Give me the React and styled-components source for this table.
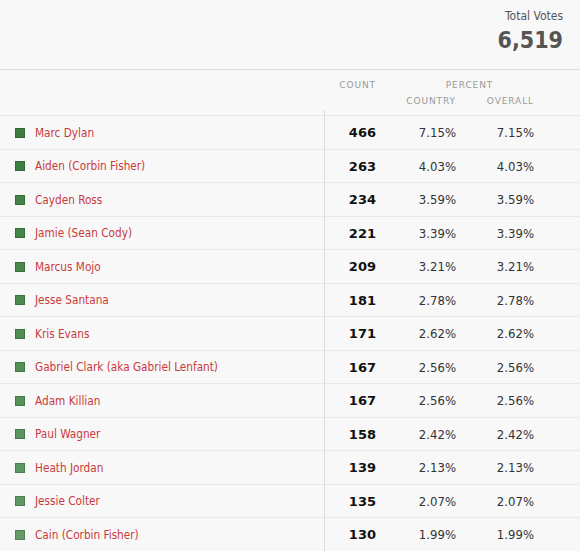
import React from "react";
import styled, { createGlobalStyle } from "styled-components";

const GlobalStyle = createGlobalStyle`
  html, body {
    margin: 0;
    padding: 0;
    background: #f8f8f8;
  }
  body {
    font-family: "DejaVu Sans Condensed", "DejaVu Sans", "Liberation Sans", sans-serif;
  }
`;

const rows = [
  ["Marc Dylan", 466, "7.15%", "7.15%"],
  ["Aiden (Corbin Fisher)", 263, "4.03%", "4.03%"],
  ["Cayden Ross", 234, "3.59%", "3.59%"],
  ["Jamie (Sean Cody)", 221, "3.39%", "3.39%"],
  ["Marcus Mojo", 209, "3.21%", "3.21%"],
  ["Jesse Santana", 181, "2.78%", "2.78%"],
  ["Kris Evans", 171, "2.62%", "2.62%"],
  ["Gabriel Clark (aka Gabriel Lenfant)", 167, "2.56%", "2.56%"],
  ["Adam Killian", 167, "2.56%", "2.56%"],
  ["Paul Wagner", 158, "2.42%", "2.42%"],
  ["Heath Jordan", 139, "2.13%", "2.13%"],
  ["Jessie Colter", 135, "2.07%", "2.07%"],
  ["Cain (Corbin Fisher)", 130, "1.99%", "1.99%"],
];

const COLS = "324px 52px 80px 78px 1fr";

const Page = styled.div`
  width: 580px;
  background: #f8f8f8;
`;

const Summary = styled.div`
  height: 70px;
  box-sizing: border-box;
  border-bottom: 1px solid #dedede;
  display: flex;
  flex-direction: column;
  align-items: flex-end;
  padding: 8px 17px 0 0;
  color: #555;
`;

const SummaryLabel = styled.div`
  font-size: 12px;
  line-height: 16px;
`;

const SummaryValue = styled.div`
  font-size: 23px;
  font-weight: bold;
  line-height: 30px;
  margin-top: 1px;
`;

const Header = styled.div`
  display: grid;
  grid-template-columns: ${COLS};
  grid-template-rows: 16px 16px 1fr 5px;
  height: 46px;
  box-sizing: border-box;
  padding-top: 7px;
  border-bottom: 1px solid #e6e6e6;
`;

const HeadLabel = styled.div`
  grid-column: ${(p) => p.$col};
  grid-row: ${(p) => p.$row};
  font-family: "DejaVu Sans", sans-serif;
  font-size: 9px;
  letter-spacing: 0.9px;
  color: #999;
  text-transform: uppercase;
  display: flex;
  align-items: center;
  justify-content: ${(p) => (p.$center ? "center" : "flex-end")};
  padding-left: ${(p) => p.$pl || 0}px;
`;

const HeadRule = styled.div`
  grid-column: 2;
  grid-row: 4;
  border-left: 1px solid #dcdcdc;
`;

const Row = styled.div`
  display: grid;
  grid-template-columns: ${COLS};
  height: 33.5px;
  box-sizing: border-box;
  border-bottom: 1px solid #e8e8e8;
  padding-top: 1px;
`;

const NameCell = styled.div`
  display: flex;
  align-items: center;
  gap: 10px;
  padding-left: 15px;
  font-size: 11.7px;
  color: #c93a3c;
`;

const Swatch = styled.span`
  width: 10px;
  height: 10px;
  box-sizing: border-box;
  background: ${(p) => p.$color};
  border: 1px solid rgba(0, 0, 0, 0.18);
  flex: none;
`;

const CountCell = styled.div`
  border-left: 1px solid #dcdcdc;
  margin-top: -1px;
  padding-top: 1px;
  display: flex;
  align-items: center;
  justify-content: flex-end;
  font-family: "DejaVu Sans", "Liberation Sans", sans-serif;
  font-size: 13px;
  font-weight: bold;
  color: #111;
`;

const PctCell = styled.div`
  display: flex;
  align-items: center;
  justify-content: flex-end;
  font-size: 13px;
  color: #333;
`;

const shade = (i) => {
  const t = i / 12;
  const r = Math.round(58 + (100 - 58) * t);
  const g = Math.round(125 + (156 - 125) * t);
  const b = Math.round(62 + (104 - 62) * t);
  return `rgb(${r}, ${g}, ${b})`;
};

const App = () => {
  return (
    <Page>
      <GlobalStyle />
      <Summary>
        <SummaryLabel>Total Votes</SummaryLabel>
        <SummaryValue>6,519</SummaryValue>
      </Summary>
      <Header>
        <HeadLabel $col="2" $row="1 / 2">Count</HeadLabel>
        <HeadLabel $col="3 / 5" $row="1 / 2" $center $pl={29}>Percent</HeadLabel>
        <HeadLabel $col="3" $row="2 / 3">Country</HeadLabel>
        <HeadLabel $col="4" $row="2 / 3">Overall</HeadLabel>
        <HeadRule />
      </Header>
      {rows.map(([name, count, country, overall], i) => (
        <Row key={name}>
          <NameCell>
            <Swatch $color={shade(i)} />
            {name}
          </NameCell>
          <CountCell>{count}</CountCell>
          <PctCell>{country}</PctCell>
          <PctCell>{overall}</PctCell>
        </Row>
      ))}
    </Page>
  );
};

export default App;
